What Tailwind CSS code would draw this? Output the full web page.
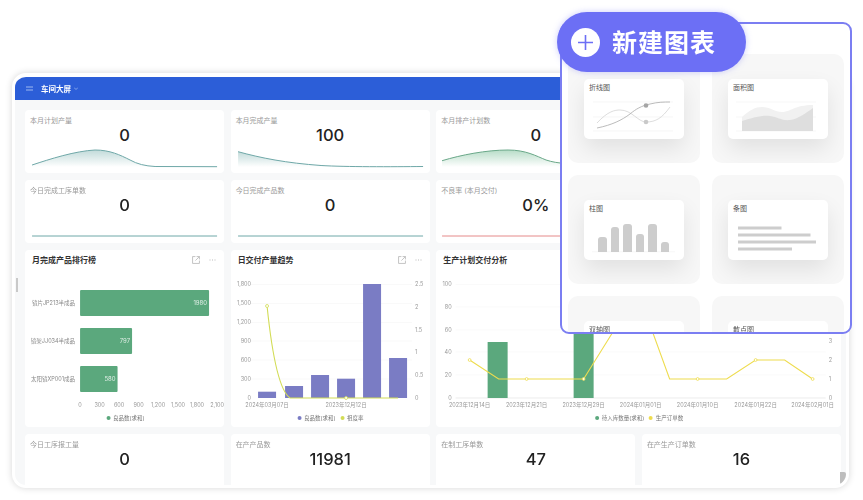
<!DOCTYPE html>
<html lang="en">
<head>
    <meta charset="UTF-8">
    <meta name="viewport" content="width=device-width, initial-scale=1.0">
    <title>新建图表</title>
    <script src="https://cdn.jsdelivr.net/npm/@tailwindcss/browser@4"></script>
</head>
<body class="bg-white overflow-hidden h-[500px] font-['Inter','Noto_Sans_CJK_SC',sans-serif]">
<div class="relative w-[863px] h-[500px] overflow-hidden blur-[0.4px]">

    <!-- Dashboard window -->
    <div class="relative ml-[12px] mt-[73px] w-[837px] h-[415px] flex flex-col overflow-hidden rounded-[14px] border-x-[3px] border-t-[4px] border-b-[3px] border-white bg-[#f7f8f9] shadow-[0_0_7px_rgba(0,0,0,0.16)]">
        <header class="flex h-[23px] shrink-0 items-center rounded-t-[8px] bg-[#2c5ed8] pl-[11px] text-white">
            <svg class="w-[7px] h-[5px] mr-[8px]" viewBox="0 0 7 5"><path d="M0 1h7M0 4h7" stroke="#9db8f0" stroke-width="1"/></svg>
            <span class="text-[7.5px] font-bold font-['Noto_Sans_CJK_SC',sans-serif]">车间大屏</span>
            <svg class="w-[4px] h-[3px] ml-[3px]" viewBox="0 0 4 3"><path d="M0 .5l2 2 2-2" fill="none" stroke="#a9c0f2" stroke-width=".7"/></svg>
        </header>

        <div class="grid grid-cols-4 gap-x-[6.5px] gap-y-[7px] pl-[10px] pr-[5px] pt-[10px] grid-rows-[63px_63px_177px_63px]">
            <!-- Row 1 -->
            <div class="flex flex-col rounded-[4px] bg-white pt-[6px]">
                <div class="h-[10px] pl-[5px] text-[7px] leading-[10px] text-[#999]">本月计划产量</div>
                <div class="h-[19px] text-center text-[16.5px] leading-[19px] font-medium text-[#222]">0</div>
                <svg class="mt-[2px] block h-[24px] w-full" viewBox="0 0 199 24">
                    <defs>
                        <linearGradient id="teal" x1="0" y1="0" x2="0" y2="1"><stop offset="0" stop-color="#8fbdbb" stop-opacity=".55"/><stop offset="1" stop-color="#8fbdbb" stop-opacity="0"/></linearGradient>
                        <linearGradient id="green" x1="0" y1="0" x2="0" y2="1"><stop offset="0" stop-color="#7cc09a" stop-opacity=".55"/><stop offset="1" stop-color="#7cc09a" stop-opacity="0"/></linearGradient>
                    </defs>
                    <path d="M7 18C25 12 50 4 70 3C85 3 95 8 105 13C112 17 120 19 130 19.5L192 19.7V20H7Z" fill="url(#teal)"/>
                    <path d="M7 18C25 12 50 4 70 3C85 3 95 8 105 13C112 17 120 19 130 19.5L192 19.7" fill="none" stroke="#6fa8a8" stroke-width="1"/>
                </svg>
            </div>
            <div class="flex flex-col rounded-[4px] bg-white pt-[6px]">
                <div class="h-[10px] pl-[5px] text-[7px] leading-[10px] text-[#999]">本月完成产量</div>
                <div class="h-[19px] text-center text-[16.5px] leading-[19px] font-medium text-[#222]">100</div>
                <svg class="mt-[2px] block h-[24px] w-full" viewBox="0 0 199 24">
                    <path d="M7 4.7C30 11 55 16 90 18.5C115 20 160 19.8 192 19.5V20H7Z" fill="url(#teal)"/>
                    <path d="M7 4.7C30 11 55 16 90 18.5C115 20 160 19.8 192 19.5" fill="none" stroke="#6fa8a8" stroke-width="1"/>
                </svg>
            </div>
            <div class="flex flex-col rounded-[4px] bg-white pt-[6px]">
                <div class="h-[10px] pl-[5px] text-[7px] leading-[10px] text-[#999]">本月排产计划数</div>
                <div class="h-[19px] text-center text-[16.5px] leading-[19px] font-medium text-[#222]">0</div>
                <svg class="mt-[2px] block h-[24px] w-full" viewBox="0 0 199 24">
                    <path d="M6 13.7C25 8 50 3 72 3C90 3 100 9 110 13C116 15 122 16 130 16.5L192 19V20H6Z" fill="url(#green)"/>
                    <path d="M6 13.7C25 8 50 3 72 3C90 3 100 9 110 13C116 15 122 16 130 16.5L192 19" fill="none" stroke="#6aa889" stroke-width="1"/>
                </svg>
            </div>
            <div class="rounded-[4px] bg-white"></div>

            <!-- Row 2 -->
            <div class="flex flex-col rounded-[4px] bg-white pt-[6px]">
                <div class="h-[10px] pl-[5px] text-[7px] leading-[10px] text-[#999]">今日完成工序单数</div>
                <div class="h-[19px] text-center text-[16.5px] leading-[19px] font-medium text-[#222]">0</div>
                <svg class="mt-[2px] block h-[24px] w-full" viewBox="0 0 199 24"><path d="M7 19H192" stroke="#6fa8a8" stroke-width="1"/></svg>
            </div>
            <div class="flex flex-col rounded-[4px] bg-white pt-[6px]">
                <div class="h-[10px] pl-[5px] text-[7px] leading-[10px] text-[#999]">今日完成产品数</div>
                <div class="h-[19px] text-center text-[16.5px] leading-[19px] font-medium text-[#222]">0</div>
                <svg class="mt-[2px] block h-[24px] w-full" viewBox="0 0 199 24"><path d="M7 19H192" stroke="#6fa8a8" stroke-width="1"/></svg>
            </div>
            <div class="flex flex-col rounded-[4px] bg-white pt-[6px]">
                <div class="h-[10px] pl-[5px] text-[7px] leading-[10px] text-[#999]">不良率 (本月交付)</div>
                <div class="h-[19px] text-center text-[16.5px] leading-[19px] font-medium text-[#222]">0%</div>
                <svg class="mt-[2px] block h-[24px] w-full" viewBox="0 0 199 24"><path d="M6 19H192" stroke="#e58a8a" stroke-width="1"/></svg>
            </div>
            <div class="rounded-[4px] bg-white"></div>

            <!-- Row 3: charts -->
            <div class="flex flex-col rounded-[4px] bg-white">
                <div class="flex h-[20px] items-center justify-between pl-[7px] pr-[8px]">
                    <span class="text-[8px] font-bold text-[#333]">月完成产品排行榜</span>
                    <span class="flex items-center gap-[9px]">
                        <svg class="h-[8px] w-[8px]" viewBox="0 0 7 7"><path d="M3 .5H.5v6h6V4M4 .5h2.5V3M6.5 .5L3 4" fill="none" stroke="#aaa" stroke-width=".6"/></svg>
                        <svg class="h-[2px] w-[7px]" viewBox="0 0 7 2"><path d="M.5 1h1M3 1h1M5.5 1h1" stroke="#aaa" stroke-width=".8"/></svg>
                    </span>
                </div>
                <svg class="block h-[157px] w-full" viewBox="25 270 199 157">
                    <g fill="#5ba87d">
                        <rect x="80" y="290" width="129" height="26" rx="1"/>
                        <rect x="80" y="328" width="52" height="26" rx="1"/>
                        <rect x="80" y="366" width="37.5" height="26" rx="1"/>
                    </g>
                    <g class="text-[6px] fill-white/80" text-anchor="end">
                        <text x="207" y="305">1980</text>
                        <text x="130" y="343">797</text>
                        <text x="115.5" y="381">580</text>
                    </g>
                    <g class="text-[5.5px] fill-[#888]" text-anchor="end">
                        <text x="75" y="305">镜片JP213半成品</text>
                        <text x="75" y="343">镜架JJ034半成品</text>
                        <text x="75" y="381">太阳镜XP001成品</text>
                    </g>
                    <g class="text-[5.5px] fill-[#999]" text-anchor="middle">
                        <text x="80" y="407">0</text><text x="99.5" y="407">300</text><text x="119" y="407">600</text><text x="138.5" y="407">900</text><text x="158" y="407">1,200</text><text x="178" y="407">1,500</text><text x="197" y="407">1,800</text><text x="217" y="407">2,100</text>
                    </g>
                    <circle cx="108.5" cy="418" r="2" fill="#5ba87d"/>
                    <text x="113" y="420" class="text-[5.5px] fill-[#777]">良品数(求和)</text>
                </svg>
            </div>

            <div class="flex flex-col rounded-[4px] bg-white">
                <div class="flex h-[20px] items-center justify-between pl-[7px] pr-[8px]">
                    <span class="text-[8px] font-bold text-[#333]">日交付产量趋势</span>
                    <span class="flex items-center gap-[9px]">
                        <svg class="h-[8px] w-[8px]" viewBox="0 0 7 7"><path d="M3 .5H.5v6h6V4M4 .5h2.5V3M6.5 .5L3 4" fill="none" stroke="#aaa" stroke-width=".6"/></svg>
                        <svg class="h-[2px] w-[7px]" viewBox="0 0 7 2"><path d="M.5 1h1M3 1h1M5.5 1h1" stroke="#aaa" stroke-width=".8"/></svg>
                    </span>
                </div>
                <svg class="block h-[157px] w-full" viewBox="231 270 199 157">
                    <path d="M250 284.5H412M250 303.5H412M250 322.5H412M250 341H412M250 360H412M250 379H412" stroke="#f5f5f5" stroke-width=".6"/>
                    <g fill="#7a7cc4">
                        <rect x="258" y="391.7" width="18" height="6.3"/>
                        <rect x="285" y="386" width="18" height="12"/>
                        <rect x="311" y="375" width="18" height="23"/>
                        <rect x="337" y="378.7" width="18" height="19.3"/>
                        <rect x="363" y="284" width="18" height="114"/>
                        <rect x="389" y="358" width="18" height="40"/>
                    </g>
                    <path d="M267 306C271 345 278 390 290 398H398" fill="none" stroke="#d2dc55" stroke-width="1.1"/>
                    <circle cx="267" cy="306" r="1.5" fill="#fff" stroke="#d2dc55" stroke-width=".8"/>
                    <circle cx="346" cy="398" r="1.5" fill="#fff" stroke="#d2dc55" stroke-width=".8"/>
                    <g class="text-[5.5px] fill-[#999]" text-anchor="end">
                        <text x="251" y="286">1,800</text><text x="251" y="305">1,500</text><text x="251" y="324">1,200</text><text x="251" y="343">900</text><text x="251" y="362">600</text><text x="251" y="381">300</text><text x="251" y="400">0</text>
                    </g>
                    <g class="text-[5.5px] fill-[#999]">
                        <text x="415" y="286">2.5</text><text x="415" y="309">2</text><text x="415" y="332">1.5</text><text x="415" y="354">1</text><text x="415" y="377">0.5</text><text x="415" y="400">0</text>
                    </g>
                    <g class="text-[5.5px] fill-[#999]" text-anchor="middle">
                        <text x="267" y="407">2024年03月07日</text>
                        <text x="346" y="407">2023年12月12日</text>
                    </g>
                    <circle cx="299.5" cy="418" r="2" fill="#7a7cc4"/>
                    <text x="304" y="420" class="text-[5.5px] fill-[#777]">良品数(求和)</text>
                    <circle cx="342.5" cy="418" r="2" fill="#d2dc55"/>
                    <text x="347" y="420" class="text-[5.5px] fill-[#777]">祖度率</text>
                </svg>
            </div>

            <div class="col-span-2 flex flex-col rounded-[4px] bg-white">
                <div class="flex h-[20px] items-center pl-[7px]">
                    <span class="text-[8px] font-bold text-[#333]">生产计划交付分析</span>
                </div>
                <svg class="block h-[157px] w-full" viewBox="436.5 270 404.5 157">
                    <path d="M456 284.5H826M456 307H826M456 330H826M456 352H826M456 375H826" stroke="#f6f6f6" stroke-width=".6"/>
                    <path d="M456 398H826" stroke="#e4e4e4" stroke-width=".7"/>
                    <g fill="#5ba87d">
                        <rect x="488" y="342" width="20" height="56"/>
                        <rect x="574" y="300" width="20" height="98"/>
                    </g>
                    <path d="M470 360L499 379H584L627 310H645L670 379H727L756 360H785L813 379" fill="none" stroke="#eedc4e" stroke-width="1.1"/>
                    <g fill="#fff" stroke="#eedc4e" stroke-width=".8">
                        <circle cx="470" cy="360" r="1.4"/><circle cx="527" cy="379" r="1.4"/><circle cx="584" cy="379" r="1.4"/><circle cx="698" cy="379" r="1.4"/><circle cx="756" cy="360" r="1.4"/><circle cx="813" cy="379" r="1.4"/>
                    </g>
                    <g class="text-[5.5px] fill-[#999]" text-anchor="end">
                        <text x="452" y="286">100</text><text x="452" y="309">80</text><text x="452" y="332">60</text><text x="452" y="354">40</text><text x="452" y="377">20</text><text x="452" y="400">0</text>
                    </g>
                    <g class="text-[5.5px] fill-[#999]">
                        <text x="829" y="343">3</text><text x="829" y="362">2</text><text x="829" y="381">1</text><text x="829" y="400">0</text>
                    </g>
                    <g class="text-[5.5px] fill-[#999]" text-anchor="middle">
                        <text x="470" y="407">2023年12月14日</text><text x="527" y="407">2023年12月21日</text><text x="584" y="407">2023年12月29日</text><text x="641" y="407">2024年01月01日</text><text x="698" y="407">2024年01月10日</text><text x="756" y="407">2024年01月22日</text><text x="813" y="407">2024年02月01日</text>
                    </g>
                    <circle cx="597.5" cy="418" r="2" fill="#5ba87d"/>
                    <text x="602" y="420" class="text-[5.5px] fill-[#777]">待入库数量(求和)</text>
                    <circle cx="651" cy="418" r="2" fill="#eedc4e"/>
                    <text x="656" y="420" class="text-[5.5px] fill-[#777]">生产订单数</text>
                </svg>
            </div>

            <!-- Row 4 -->
            <div class="flex flex-col rounded-[4px] bg-white pt-[6px]">
                <div class="h-[10px] pl-[5px] text-[7px] leading-[10px] text-[#999]">今日工序报工量</div>
                <div class="h-[19px] text-center text-[16.5px] leading-[19px] font-medium text-[#222]">0</div>
            </div>
            <div class="flex flex-col rounded-[4px] bg-white pt-[6px]">
                <div class="h-[10px] pl-[5px] text-[7px] leading-[10px] text-[#999]">在产产品数</div>
                <div class="h-[19px] text-center text-[16.5px] leading-[19px] font-medium text-[#222]">11981</div>
            </div>
            <div class="flex flex-col rounded-[4px] bg-white pt-[6px]">
                <div class="h-[10px] pl-[5px] text-[7px] leading-[10px] text-[#999]">在制工序单数</div>
                <div class="h-[19px] text-center text-[16.5px] leading-[19px] font-medium text-[#222]">47</div>
            </div>
            <div class="flex flex-col rounded-[4px] bg-white pt-[6px]">
                <div class="h-[10px] pl-[5px] text-[7px] leading-[10px] text-[#999]">在产生产订单数</div>
                <div class="h-[19px] text-center text-[16.5px] leading-[19px] font-medium text-[#222]">16</div>
            </div>
        </div>

        <!-- scrollbar handle and resize corner -->
        <div class="absolute left-[1px] top-[201px] h-[14px] w-[2px] bg-[#c9c9c9]"></div>
        <div class="absolute bottom-0 right-0 h-[13px] w-[6px] rounded-tr-[2px] rounded-bl-[3px] bg-[#bdbdbd]"></div>
    </div>

    <!-- Chart type picker -->
    <div class="absolute left-[560px] top-[22px] h-[312px] w-[292px] overflow-hidden rounded-[9px] border-2 border-[#7b7ef2] bg-white px-[6px] pt-[30px] font-['Noto_Sans_CJK_SC',sans-serif]">
        <div class="grid grid-cols-2 gap-x-[12px] gap-y-[12px] grid-rows-[109px_109px_109px]">
            <div class="overflow-hidden rounded-[10px] bg-[#f7f7f7] px-[16px] pt-[25px]">
                <div class="h-[60px] rounded-[5px] bg-white shadow-[0_10px_22px_rgba(0,0,0,0.09)]">
                    <div class="h-[16px] pl-[5px] pt-[2px] text-[7px] leading-[12px] text-[#555]">折线图</div>
                    <svg class="block h-[44px] w-full" viewBox="584 95 100 44">
                        <path d="M593 102H673M593 117H673M593 131H673" stroke="#f2f2f2" stroke-width=".7"/>
                        <path d="M597 123C608 111 615 110 620 110C632 110 638 122 646 122C656 122 662 118 670 107" fill="none" stroke="#cfcfcf" stroke-width=".7"/>
                        <path d="M597 128C612 125 622 120 630 114C636 109 641 106 650 104C658 102 664 102 670 102" fill="none" stroke="#aaa" stroke-width=".8"/>
                        <circle cx="646" cy="105.5" r="2.3" fill="#a5a5a5"/>
                        <circle cx="646" cy="122" r="2.3" fill="#c9c9c9"/>
                    </svg>
                </div>
            </div>
            <div class="overflow-hidden rounded-[10px] bg-[#f7f7f7] px-[16px] pt-[25px]">
                <div class="h-[60px] rounded-[5px] bg-white shadow-[0_10px_22px_rgba(0,0,0,0.09)]">
                    <div class="h-[16px] pl-[5px] pt-[2px] text-[7px] leading-[12px] text-[#555]">面积图</div>
                    <svg class="block h-[44px] w-full" viewBox="728 95 100 44">
                        <path d="M736 102H816M736 117H816M736 131H816" stroke="#f4f4f4" stroke-width=".7"/>
                        <path d="M742 117C750 110 755 107 762 107C770 107 775 112 782 112C790 112 795 105 813 105V131H742Z" fill="#f1f1f1"/>
                        <path d="M742 121C752 118 762 115 770 116C778 117 782 121 790 120C798 119 806 113 813 108V131H742Z" fill="#dedede"/>
                    </svg>
                </div>
            </div>
            <div class="overflow-hidden rounded-[10px] bg-[#f7f7f7] px-[16px] pt-[25px]">
                <div class="h-[60px] rounded-[5px] bg-white shadow-[0_10px_22px_rgba(0,0,0,0.09)]">
                    <div class="h-[16px] pl-[5px] pt-[2px] text-[7px] leading-[12px] text-[#555]">柱图</div>
                    <svg class="block h-[44px] w-full" viewBox="584 216 100 44">
                        <path d="M592 251.7H675" stroke="#f2f2f2" stroke-width=".6"/>
                        <g fill="#cdcdcd">
                            <path d="M598 252V240a3 3 0 0 1 3-3h3a3 3 0 0 1 3 3v12Z"/>
                            <path d="M611 252V230a3 3 0 0 1 3-3h2a3 3 0 0 1 3 3v22Z"/>
                            <path d="M623 252V227a3 3 0 0 1 3-3h3a3 3 0 0 1 3 3v25Z"/>
                            <path d="M636 252V237a3 3 0 0 1 3-3h2a3 3 0 0 1 3 3v15Z"/>
                            <path d="M648 252V227a3 3 0 0 1 3-3h3a3 3 0 0 1 3 3v25Z"/>
                            <path d="M661 252V245a3 3 0 0 1 3-3h2a3 3 0 0 1 3 3v7Z"/>
                        </g>
                    </svg>
                </div>
            </div>
            <div class="overflow-hidden rounded-[10px] bg-[#f7f7f7] px-[16px] pt-[25px]">
                <div class="h-[60px] rounded-[5px] bg-white shadow-[0_10px_22px_rgba(0,0,0,0.09)]">
                    <div class="h-[16px] pl-[5px] pt-[2px] text-[7px] leading-[12px] text-[#555]">条图</div>
                    <svg class="block h-[44px] w-full" viewBox="728 216 100 44">
                        <g fill="#cdcdcd">
                            <rect x="738" y="226.5" width="43.5" height="3"/>
                            <rect x="738" y="233.5" width="72.5" height="3"/>
                            <rect x="738" y="240.5" width="78" height="3"/>
                            <rect x="738" y="247.5" width="54" height="3"/>
                        </g>
                    </svg>
                </div>
            </div>
            <div class="rounded-[10px] bg-[#f7f7f7] px-[16px] pt-[25px]">
                <div class="h-[60px] rounded-[5px] bg-white">
                    <div class="h-[16px] pl-[5px] pt-[2px] text-[7px] leading-[12px] text-[#555]">双轴图</div>
                </div>
            </div>
            <div class="rounded-[10px] bg-[#f7f7f7] px-[16px] pt-[25px]">
                <div class="h-[60px] rounded-[5px] bg-white">
                    <div class="h-[16px] pl-[5px] pt-[2px] text-[7px] leading-[12px] text-[#555]">散点图</div>
                </div>
            </div>
        </div>
    </div>

    <!-- New chart button -->
    <div class="absolute left-[557px] top-[12px] flex h-[60px] w-[189px] items-center rounded-full bg-[#6c6ff5] pl-[14px] shadow-[0_0_6px_rgba(108,111,245,0.35)]">
        <span class="flex h-[29px] w-[29px] items-center justify-center rounded-full bg-white">
            <svg class="h-[17px] w-[17px]" viewBox="0 0 17 17"><path d="M8.5 1v15M1 8.5h15" stroke="#6c6ff5" stroke-width="1.6"/></svg>
        </span>
        <span class="ml-[12px] font-['Noto_Sans_CJK_SC',sans-serif] text-[25px] font-bold tracking-[1px] text-white">新建图表</span>
    </div>
</div>
</body>
</html>
